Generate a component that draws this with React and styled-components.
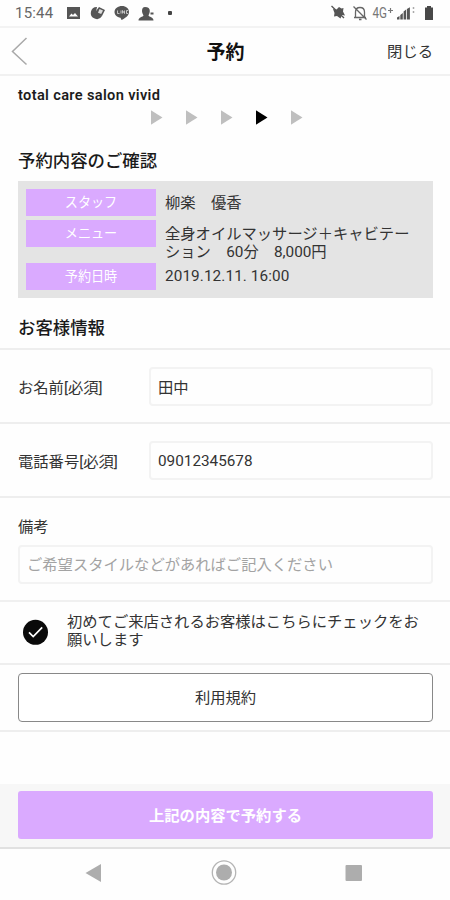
import React from "react"
import styled, { createGlobalStyle } from "styled-components"

const GlobalStyle = createGlobalStyle`
* {
  box-sizing: border-box;
}
body {
  margin: 0;
  background-color: #fefefe;
  color: #333;
  font-family: Roboto, "Noto Sans CJK JP", sans-serif;
  font-size: 15.3px;
}
`

const Screen = styled.div`
display: flex;
flex-direction: column;
width: 450px;
height: 900px;
overflow: hidden;
`

const StatusBar = styled.div`
display: flex;
justify-content: space-between;
height: 28px;
padding: 0 14px 0 15px;
border-bottom: 2px solid #f3f3f3;
color: #555;
`

const Clock = styled.span`
width: 50px;
font-size: 15px;
line-height: 27px;
letter-spacing: 0.2px;
color: #666;
`

const StatusGroup = styled.div`
display: flex;
`

const Header = styled.header`
display: grid;
grid-template-columns: 80px 1fr 80px;
align-items: center;
height: 48px;
padding: 0 17px 0 11px;
border-bottom: 2px solid #f1f1f1;
`

const Title = styled.h1`
margin: 0;
padding: 2px 0 0 7px;
text-align: center;
font-size: 19px;
font-weight: 700;
line-height: 46px;
color: #111;
`

const Close = styled.span`
text-align: right;
line-height: 46px;
`

const Shop = styled.div`
height: 31px;
padding: 10px 18px 0;
font-size: 14.6px;
font-weight: 600;
line-height: 18px;
letter-spacing: 0.34px;
color: #1c1c1c;
`

const Steps = styled.div`
display: flex;
justify-content: center;
gap: 23px;
height: 41px;
padding: 3px 0 0 3px;
`

const Step = styled.span`
width: 12px;
height: 15px;
background-color: ${(props) => (props.$active ? "#000" : "#bfbfbf")};
clip-path: polygon(0 0, 100% 50%, 0 100%);
`

const Heading = styled.h2`
height: ${(props) => props.$height};
margin: 0;
padding: ${(props) => props.$top} 18px 0;
font-size: 17.4px;
font-weight: 500;
line-height: 25px;
color: #1a1a1a;
`

const Summary = styled.dl`
display: grid;
grid-template-columns: 130px 1fr;
grid-template-rows: 31px 43px 27px;
column-gap: 9px;
height: 117px;
margin: 0 17px 0 18px;
padding: 8px 8px 0;
background-color: #e4e4e4;
`

const Label = styled.dt`
height: 27px;
background-color: #daaaff;
color: #fff;
font-size: 13.1px;
line-height: 27px;
text-align: center;
`

const Value = styled.dd`
margin: 0;
padding-top: ${(props) => (props.$date ? "4px" : "5px")};
line-height: 18.2px;
letter-spacing: ${(props) => (props.$date ? "0.1px" : "0")};
white-space: nowrap;
`

const Field = styled.label`
display: grid;
grid-template-columns: 131px 1fr;
align-items: center;
height: 74px;
padding: 0 17px 0 18px;
border-top: 2px solid #eee;
`

const Note = styled.label`
display: flex;
flex-direction: column;
height: 104px;
padding: 20px 17px 0 18px;
border-top: 2px solid #eee;
line-height: 18px;
gap: 9px;
`

const Input = styled.input`
width: 100%;
height: 39px;
flex-shrink: 0;
padding: ${(props) => (props.type === "tel" ? "2px 7px 0" : "0 7px")};
border: 2px solid #f3f3f3;
border-radius: 4px;
outline: none;
background-color: #fefefe;
color: #333;
font-family: inherit;
font-size: 15.3px;
&::placeholder {
  color: #a3a3a3;
  opacity: 1;
}
`

const FirstVisit = styled.div`
display: grid;
grid-template-columns: 44px 1fr;
align-items: center;
height: 63px;
padding: 0 17px 3px 23px;
border-top: 2px solid #f0f0f0;
line-height: 18.2px;
`

const Terms = styled.div`
height: 69px;
padding: 8px 17px 0 18px;
border-top: 2px solid #eee;
border-bottom: 2px solid #eee;
`

const TermsButton = styled.button`
width: 100%;
height: 49px;
padding: 0;
border: 1.5px solid #888;
border-radius: 4px;
background-color: #fff;
color: #333;
font-family: inherit;
font-size: 15.3px;
line-height: 18px;
`

const Footer = styled.div`
height: 65px;
margin-top: auto;
padding: 7px 17px 0 18px;
border-bottom: 2px solid #e1e1e1;
background-color: #f7f7f7;
`

const SubmitButton = styled.button`
width: 100%;
height: 48px;
padding: 0 0 2px;
border: none;
border-radius: 3px;
background-color: #daaaff;
color: #fff;
font-family: inherit;
font-size: 15.3px;
font-weight: 700;
`

const NavBar = styled.nav`
height: 51px;
flex-shrink: 0;
`

function NoticeIcons() {
  return (
    <svg width="112" height="26" viewBox="65 0 112 26" fill="#555">
      <path fillRule="evenodd" d="M67 7h13v12H67zM69 16.500h9l-3-3.500-2 2-1.500-1.500z" />
      <path d="M97 7a6 6 0 1 0 5 9l-2-1-4-3z" />
      <path d="M96 11l3-4 6 3-3 6-6-1z" />
      <path d="M99.500 9l3.500 1.500-1.800 3.500-3.200-1.300z" fill="#ddd" />
      <path d="M122 6c-4 0-7.500 2.500-7.500 6 0 3 2.500 5 6 5.700l1 2.300c3-1.500 7.500-4 7.500-8 0-3.500-3-6-7-6z" />
      <path d="M117.500 10.500v3h2M121 10.500v3M122.500 13.500v-3l2 3v-3M128 10.500h-1.500v3h1.500" fill="none" stroke="#ddd" strokeWidth=".8" />
      <path d="M145 7c-2 0-3 1.500-3 4 0 2 1 3 1.500 4.500-.5 1.500-5 1.500-5 5h15c0-3.500-4.500-3.500-5-5 .5-1.500 1.300-2.500 1.300-4.500 0-2.500-1.500-4-4.800-4zM150.500 12.500h3v2h-3z" />
      <rect x="168" y="11" width="4" height="4" rx="1" fill="#444" />
    </svg>
  )
}

function SystemIcons() {
  return (
    <svg width="106" height="26" viewBox="330 0 106 26" fill="#555">
      <path d="M333 9l3.500.5 2.500-2.500 2.500 1.500 2-.5-.5 3.500 2 4-3-.5-1.500 3.500-3.500-2.500-3 .5.500-3.500z" />
      <path d="M331.500 6l12.500 12" stroke="#555" strokeWidth="1.300" />
      <path d="M355.500 17V12c0-3 1.800-4.500 4.500-4.500s4.500 1.500 4.500 4.500v5M354 17.500h12M359 19.500h2.500M353.500 6.500l13 13" fill="none" stroke="#666" strokeWidth="1.300" />
      <text x="372.500" y="18" fontSize="14" fill="#777" textLength="14.500" lengthAdjust="spacingAndGlyphs">4G</text>
      <path d="M388 10.500h5M390.500 8v5" stroke="#777" strokeWidth="1.200" />
      <path d="M397 19.500v-2l2.500-1.500v3.500zM400.300 19.500V15l2.500-2v6.500zM403.600 19.500v-8l2.500-2v10zM406.900 19.500V9l3-1.800v12.300z" />
      <path d="M413.500 7v2M413.500 11v2" stroke="#aaa" strokeWidth="1.500" />
      <path d="M427 6h4v1.500h2V20h-8V7.500h2z" fill="#484848" />
    </svg>
  )
}

function BackIcon() {
  return (
    <svg width="18" height="30" viewBox="0 0 18 30" fill="none" stroke="#a9a9a9" strokeWidth="1.500">
      <path d="M15.500 1L1.500 14.500l14 13" />
    </svg>
  )
}

function CheckIcon() {
  return (
    <svg width="26" height="28" viewBox="0 0 26 28">
      <circle cx="12.500" cy="15.300" r="12.500" fill="#0a0a0a" />
      <path d="M6 15.300l4.200 4.200 9-9.200" fill="none" stroke="#fff" strokeWidth="1.700" />
    </svg>
  )
}

function NavIcons() {
  return (
    <svg width="450" height="51" viewBox="0 0 450 51" fill="#adadad">
      <path d="M101 15v18L85.500 24z" />
      <circle cx="224" cy="23.500" r="11.700" fill="none" stroke="#b5b5b5" strokeWidth="1.300" />
      <circle cx="224" cy="23.500" r="8" />
      <rect x="345.500" y="16" width="16.500" height="16" rx="1" />
    </svg>
  )
}

export default class App extends React.Component {

  state = {
    name: "田中",
    tel: "09012345678",
    note: ""
  }

  handleChange = (event) => {
    this.setState({ [event.target.name]: event.target.value })
  }

  render() {
    return (
      <Screen>
        <GlobalStyle />
        <StatusBar>
          <StatusGroup>
            <Clock>15:44</Clock>
            <NoticeIcons />
          </StatusGroup>
          <SystemIcons />
        </StatusBar>
        <Header>
          <BackIcon />
          <Title>予約</Title>
          <Close>閉じる</Close>
        </Header>

        <Shop>total care salon vivid</Shop>
        <Steps>
          {[1, 2, 3, 4, 5].map((step) => (
            <Step key={step} $active={step === 4} />
          ))}
        </Steps>

        <Heading $height="33px" $top="1px">予約内容のご確認</Heading>
        <Summary>
          <Label>スタッフ</Label>
          <Value>柳楽　優香</Value>
          <Label>メニュー</Label>
          <Value>全身オイルマッサージ＋キャビテー<br />ション　60分　8,000円</Value>
          <Label>予約日時</Label>
          <Value $date>2019.12.11. 16:00</Value>
        </Summary>

        <Heading $height="50px" $top="18px">お客様情報</Heading>
        <Field>
          お名前[必須]
          <Input name="name" value={this.state.name} onChange={this.handleChange} />
        </Field>
        <Field>
          電話番号[必須]
          <Input type="tel" name="tel" value={this.state.tel} onChange={this.handleChange} />
        </Field>
        <Note>
          備考
          <Input
            name="note"
            value={this.state.note}
            placeholder="ご希望スタイルなどがあればご記入ください"
            onChange={this.handleChange} />
        </Note>
        <FirstVisit>
          <CheckIcon />
          <span>初めてご来店されるお客様はこちらにチェックをお<br />願いします</span>
        </FirstVisit>
        <Terms>
          <TermsButton>利用規約</TermsButton>
        </Terms>

        <Footer>
          <SubmitButton>上記の内容で予約する</SubmitButton>
        </Footer>
        <NavBar>
          <NavIcons />
        </NavBar>
      </Screen>
    )
  }
}
